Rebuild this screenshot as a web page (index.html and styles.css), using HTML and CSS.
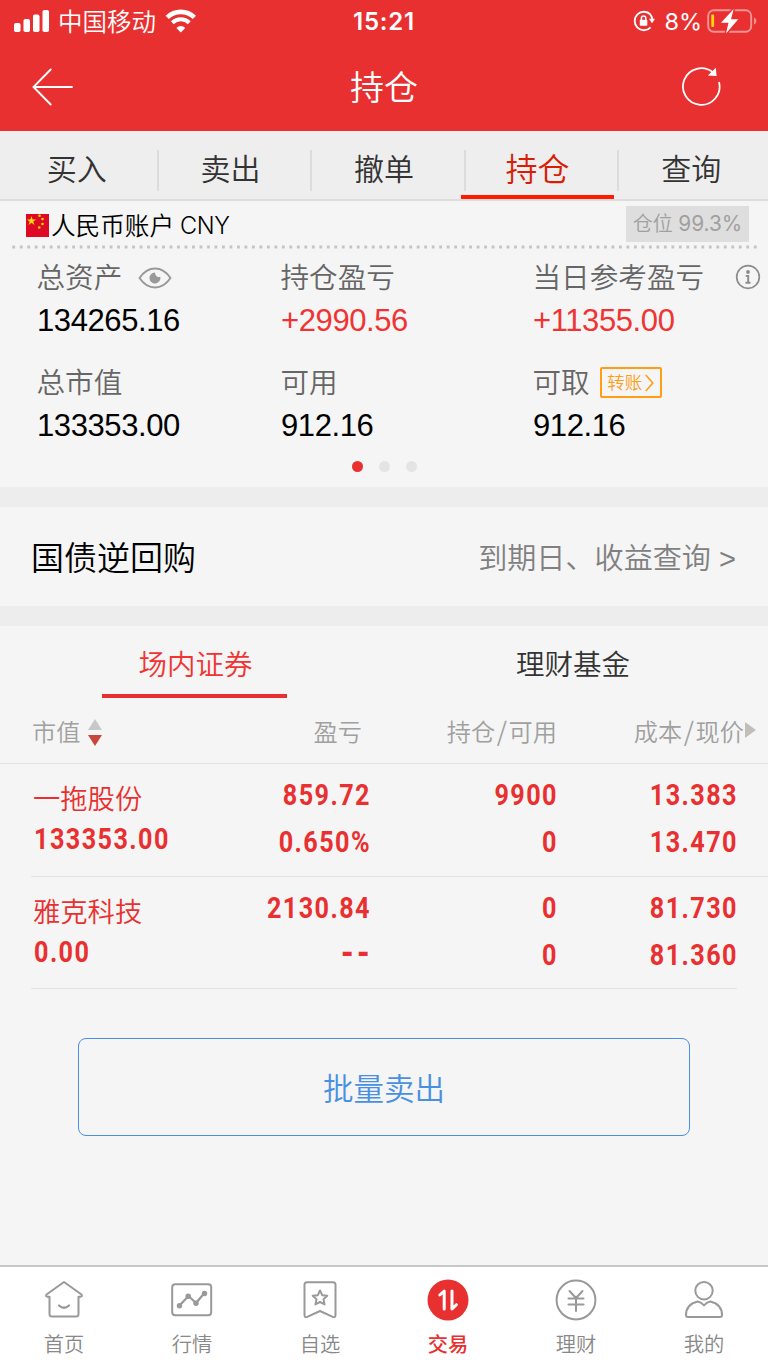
FILE: index.html
```html
<!DOCTYPE html>
<html lang="zh-CN">
<head>
<meta charset="UTF-8">
<title>持仓</title>
<link rel="stylesheet" href="styles.css">
</head>
<body>

<header>
  <div class="status-bar">
    <div class="status-left">
      <svg width="36" height="24" viewBox="0 0 36 24" fill="#fff">
        <rect x="0" y="14" width="6.5" height="9" rx="1.8"/>
        <rect x="9.5" y="10" width="6.5" height="13" rx="1.8"/>
        <rect x="19" y="5.500" width="6.500" height="17.500" rx="1.8"/>
        <rect x="28.500" y="1" width="6.500" height="22" rx="1.8"/>
      </svg>
      <span class="carrier">中国移动</span>
      <svg width="32" height="24" viewBox="0 0 32 24" fill="none" stroke="#fff">
        <path d="M2.200 8.400a19.500 19.500 0 0 1 27.200 0" stroke-width="4.600"/>
        <path d="M7.300 13.700a12.300 12.300 0 0 1 17 0" stroke-width="4"/>
        <path d="M15.800 23.400l-4.400-4.500a6.300 6.300 0 0 1 8.800 0z" fill="#fff" stroke="none"/>
      </svg>
    </div>
    <div class="clock">15:21</div>
    <div class="status-right">
      <svg width="22" height="22" viewBox="0 0 22 22">
        <path d="M17.600 4.700A9.200 9.200 0 1 0 17.600 17.300" fill="none" stroke="#fff" stroke-width="1.900"/>
        <path d="M17.300 4.500Q19.300 6.800 19.300 10" fill="none" stroke="#fff" stroke-width="1.900"/>
        <path d="M16 8.800h6l-3 4.500z" fill="#fff"/>
        <rect x="6.800" y="9.800" width="7.500" height="6" rx="0.800" fill="#fff"/>
        <path d="M8.400 10V8.200a2.200 2.200 0 0 1 4.400 0V10" fill="none" stroke="#fff" stroke-width="1.500"/>
      </svg>
      <span class="percent">8%</span>
      <svg width="50" height="26" viewBox="0 0 50 26">
        <rect x="1.200" y="2.200" width="43" height="21.500" rx="5.500" fill="none" stroke="#f39496" stroke-width="1.900"/>
        <path d="M47 9.500c3 1 3 6 0 7z" fill="#f39496"/>
        <rect x="4.300" y="6.500" width="2.800" height="12.500" rx="1" fill="#ffd60a"/>
        <path d="M26.700 1L14 14.800h7.500L19 25.500 31.300 11.300H24z" fill="#fff" stroke="#e93030" stroke-width="3" paint-order="stroke"/>
      </svg>
    </div>
  </div>
  <div class="title-bar">
    <svg width="42" height="38" viewBox="0 0 42 38" fill="none" stroke="#fff" stroke-width="1.900" stroke-linecap="round">
      <path d="M18.700 1.500L1.500 19l17.200 17.500M2 19h38"/>
    </svg>
    <h1>持仓</h1>
    <svg width="40" height="40" viewBox="0 1.500 40 40">
      <path d="M32 7A18.300 18.300 0 1 0 38 16.500" fill="none" stroke="#fff" stroke-width="1.800"/>
      <path d="M34.800 2.300l.8 8.200-8.800-.4z" fill="#fff"/>
    </svg>
  </div>
</header>

<nav class="tabs">
  <a>买入</a>
  <a>卖出</a>
  <a>撤单</a>
  <a class="active">持仓</a>
  <a>查询</a>
</nav>

<section class="account">
  <div class="account-name">
    <svg width="23" height="23" viewBox="0 0 23 23">
      <rect width="23" height="23" fill="#de0a25"/>
      <g fill="#ffde00">
        <path d="M5.500 2l1.100 3.400h3.500L7.300 7.500l1.100 3.400-2.900-2.100-2.900 2.100 1.100-3.400L.9 5.400h3.500z"/>
        <circle cx="13.500" cy="1.700" r="1.300"/>
        <circle cx="16.500" cy="5" r="1.300"/>
        <circle cx="16.500" cy="10" r="1.300"/>
        <circle cx="13.200" cy="13.500" r="1.300"/>
      </g>
    </svg>
    <span>人民币账户</span>
    <span class="currency">CNY</span>
  </div>
  <div class="position">仓位 <span>99.3%</span></div>
</section>
<svg class="dots-line" width="768" height="4"><path d="M12.300 2H758" stroke="#c4c4c4" stroke-width="2.800" stroke-dasharray="2.800 4.690"/></svg>

<section class="summary">
  <div class="item">
    <div class="label">总资产
      <svg class="eye" width="34" height="22" viewBox="0 0 34 22">
        <path d="M1.500 11Q8 1.500 17 1.500T32.500 11Q26 20.500 17 20.500T1.500 11z" fill="none" stroke="#999" stroke-width="1.900"/>
        <path d="M17 5.500a5.500 5.500 0 1 0 5.300 4.200q-4.800 1.300-5.300-4.200z" fill="#999"/>
      </svg>
    </div>
    <div class="value">134265.16</div>
  </div>
  <div class="item">
    <div class="label">持仓盈亏</div>
    <div class="value up">+2990.56</div>
  </div>
  <div class="item">
    <div class="label">当日参考盈亏
      <svg class="info" width="26" height="26" viewBox="0 0 26 26" fill="none" stroke="#8c8c8c">
        <circle cx="13" cy="13" r="11.300" stroke-width="1.700"/>
        <circle cx="13" cy="8" r="1.900" fill="#8c8c8c" stroke="none"/>
        <path d="M10.700 11.900h2.500v6.500M10.500 18.700h5" stroke-width="1.900"/>
      </svg>
    </div>
    <div class="value up">+11355.00</div>
  </div>
  <div class="item">
    <div class="label">总市值</div>
    <div class="value">133353.00</div>
  </div>
  <div class="item">
    <div class="label">可用</div>
    <div class="value">912.16</div>
  </div>
  <div class="item">
    <div class="label">可取
      <span class="transfer">转账
        <svg width="9" height="18" viewBox="0 0 9 18" fill="none" stroke="#ff9d15" stroke-width="1.600"><path d="M.8 1l7 8-7 8"/></svg>
      </span>
    </div>
    <div class="value">912.16</div>
  </div>
</section>
<div class="pager"><i class="on"></i><i></i><i></i></div>

<div class="gap"></div>

<section class="repo">
  <h2>国债逆回购</h2>
  <a>到期日、收益查询 <span>&gt;</span></a>
</section>

<div class="gap"></div>

<nav class="sub-tabs">
  <a class="active"><span>场内证券</span></a>
  <a><span>理财基金</span></a>
</nav>

<section class="holdings">
  <div class="row head">
    <div>市值
      <svg width="14" height="27" viewBox="0 0 14 27">
        <path d="M7 0l7 11H0z" fill="#c8c8c8"/>
        <path d="M0 16h14L7 27z" fill="#c8473d"/>
      </svg>
    </div>
    <div>盈亏</div>
    <div>持仓<i>/</i>可用</div>
    <div>成本<i>/</i>现价</div>
    <svg class="more" width="11" height="16" viewBox="0 0 11 16"><path d="M0 0l11 8-11 8z" fill="#c2bebb"/></svg>
  </div>
  <div class="row">
    <div><b class="name">一拖股份</b><b>133353.00</b></div>
    <div><b>859.72</b><b>0.650%</b></div>
    <div><b>9900</b><b>0</b></div>
    <div><b>13.383</b><b>13.470</b></div>
  </div>
  <div class="row last">
    <div><b class="name">雅克科技</b><b>0.00</b></div>
    <div><b>2130.84</b><b class="dash">--</b></div>
    <div><b>0</b><b>0</b></div>
    <div><b>81.730</b><b>81.360</b></div>
  </div>
</section>

<button class="sell-btn">批量卖出</button>

<footer>
  <a>
    <svg width="42" height="42" viewBox="0 0 42 42">
      <path d="M21 3L3.500 15.500q-1.200 2 1 2.300H6.500V35q0 2.500 2.500 2.500h24q2.500 0 2.500-2.500V17.800h2q2.200-.3 1-2.300z"/>
      <path d="M16 26.500q5 4.500 10 0" stroke-width="2.300"/>
    </svg>
    首页
  </a>
  <a>
    <svg width="42" height="42" viewBox="0 0 42 42">
      <rect x="1.200" y="5.200" width="39" height="31" rx="3"/>
      <path d="M8.500 26.500l9-9.500 7.500 7 8.500-10" stroke-width="2.300"/>
      <g fill="#999" stroke="none"><circle cx="8.500" cy="26.700" r="2.700"/><circle cx="17.200" cy="17.300" r="2.700"/><circle cx="25" cy="24.200" r="2.700"/><circle cx="33.500" cy="14.500" r="2.700"/></g>
    </svg>
    行情
  </a>
  <a>
    <svg width="42" height="42" viewBox="0 0 42 42">
      <path d="M8 3.300h26q2.500 0 2.500 2.500V36q0 3-2.800 1.800L21 32 8.300 37.800Q5.500 39 5.500 36V5.800Q5.500 3.300 8 3.300z"/>
      <path d="M21 11.500l2.200 4.700 5.100.6-3.800 3.500 1 5.100-4.500-2.500-4.500 2.500 1-5.100-3.800-3.500 5.100-.6z"/>
    </svg>
    自选
  </a>
  <a class="active">
    <svg width="42" height="42" viewBox="0 0 42 42">
      <circle cx="21" cy="21" r="20.500" fill="#e93030" stroke="none"/>
      <path d="M12.800 16l4.400-4v18M25 12v18l4.400-4.300" stroke="#fff" stroke-width="3"/>
    </svg>
    交易
  </a>
  <a>
    <svg width="42" height="42" viewBox="0 0 42 42">
      <circle cx="21" cy="21" r="19.400"/>
      <path d="M14.500 12l6.500 7 6.500-7M21 19v13M13.500 19.500h15M13.500 25.500h15"/>
    </svg>
    理财
  </a>
  <a>
    <svg width="42" height="42" viewBox="0 0 42 42">
      <circle cx="21" cy="11.700" r="8.700"/>
      <path d="M14.500 22.500q3.500.5 6.500 3.800 3-3.300 6.500-3.800 11.500 3 11.500 13.500 0 2-2 2H5q-2 0-2-2Q3 25.500 14.500 22.500z"/>
    </svg>
    我的
  </a>
</footer>

</body>
</html>
```
FILE: styles.css
```css
* {
  box-sizing: border-box;
}

body {
  margin: 0;
  height: 1367px;
  display: flex;
  flex-direction: column;
  background: #f5f5f5;
  color: #000;
  font-family: "Liberation Sans", "Noto Sans CJK SC", sans-serif;
  font-weight: 350;
  overflow: hidden;
}

svg {
  display: block;
  flex: none;
}

h1, h2 {
  margin: 0;
  font-weight: 350;
}

header {
  height: 131px;
  background: #e93030;
  color: #fff;
}

.status-bar {
  height: 42px;
  padding: 0 11px 0 14px;
  display: grid;
  grid-template-columns: 1fr auto 1fr;
  align-items: center;
}

.status-left, .status-right {
  display: flex;
  align-items: center;
}

.status-right {
  justify-content: flex-end;
}

.carrier {
  font-size: 24.5px;
  line-height: 36px;
  margin: 3px 9px 0 8px;
}

.clock {
  font: 600 24px Inter, sans-serif;
  letter-spacing: 0.8px;
  margin-right: 3px;
}

.percent {
  font: 400 23.5px Inter, sans-serif;
  margin: 0 5px 0 9px;
}

.title-bar {
  height: 87px;
  padding: 0 32px;
  display: grid;
  grid-template-columns: 1fr auto 1fr;
  align-items: center;
}

.title-bar h1 {
  font-size: 34px;
}

.title-bar svg {
  margin-top: 2px;
}

.title-bar svg:last-child {
  margin-left: auto;
  margin-right: 15px;
}

.tabs {
  height: 70px;
  display: flex;
  background: #eee;
  border-bottom: 2px solid #dcdcdc;
}

.tabs a {
  flex: 1;
  height: 68px;
  position: relative;
  display: flex;
  align-items: center;
  justify-content: center;
  padding-top: 3px;
  font-size: 30px;
  color: #333;
}

.tabs a + a::before {
  content: "";
  position: absolute;
  left: 3px;
  top: 19px;
  width: 2px;
  height: 41px;
  background: #dcdcdc;
}

.tabs .active {
  font-size: 32px;
  color: #d81e06;
}

.tabs .active::after {
  content: "";
  position: absolute;
  left: 0;
  right: 0;
  bottom: 0;
  height: 4px;
  background: #ff1a00;
}

.account {
  height: 44px;
  padding: 0 19px 0 26px;
  display: flex;
  align-items: center;
  justify-content: space-between;
}

.account-name {
  display: flex;
  align-items: center;
  font-size: 24.6px;
  line-height: 30px;
  padding-top: 5px;
}

.account-name span {
  margin-left: 2px;
  margin-top: 2px;
}

.account-name .currency {
  font: 350 23.5px Inter, sans-serif;
  letter-spacing: -0.4px;
  margin-left: 6px;
  margin-top: 0;
}

.position {
  width: 123px;
  height: 36px;
  line-height: 36px;
  margin-top: 2px;
  background: #dedede;
  color: #a0a0a0;
  font-size: 20px;
  text-align: center;
  white-space: nowrap;
}

.position span {
  font-family: Inter, sans-serif;
  font-weight: 400;
  font-size: 20.8px;
}

.summary {
  height: 204px;
  padding: 8px 0 0 37px;
  display: grid;
  grid-template-columns: 244px 252px 1fr;
  grid-auto-rows: 104.5px;
}

.label {
  height: 40px;
  display: flex;
  align-items: center;
  font-size: 28.6px;
  line-height: 36px;
  padding-top: 2px;
  margin-left: -0.5px;
  color: #666;
  white-space: nowrap;
}

.value {
  height: 48px;
  line-height: 48px;
  font-size: 31px;
  letter-spacing: -0.4px;
}

.up {
  color: #f03333;
}

.eye {
  margin-left: 16px;
}

.info {
  margin-left: 31px;
  margin-top: -2px;
}

.transfer {
  width: 62px;
  height: 31px;
  margin-left: 10px;
  border: 2px solid #ff9d15;
  border-radius: 2px;
  display: flex;
  align-items: center;
  justify-content: center;
  gap: 3px;
  font-size: 17.5px;
  line-height: 24px;
  color: #ff9d15;
}

.pager {
  height: 34px;
  padding-top: 8px;
  display: flex;
  justify-content: center;
  gap: 16px;
}

.pager i {
  width: 11px;
  height: 11px;
  border-radius: 50%;
  background: #e4e4e4;
}

.pager .on {
  background: #e93030;
}

.gap {
  height: 20px;
  background: #ededed;
}

.repo {
  height: 99px;
  padding: 0 32px 1px 31px;
  display: flex;
  align-items: center;
  justify-content: space-between;
}

.repo h2 {
  font-size: 33px;
}

.repo a {
  font-size: 29.1px;
  color: #808080;
}

.sub-tabs {
  height: 72px;
  display: flex;
  font-size: 28.5px;
  color: #333;
}

.sub-tabs a {
  width: 184px;
  height: 72px;
  margin-left: 102px;
  line-height: 79px;
  text-align: center;
}

.sub-tabs a + a {
  margin-left: 194px;
}

.sub-tabs .active {
  width: 185px;
  padding-left: 2px;
  border-bottom: 4px solid #e93030;
  color: #f03333;
}

.row {
  height: 113px;
  margin-left: 31px;
  padding-right: 31px;
  display: grid;
  grid-template-columns: 169px 170px 187px 180px;
  border-bottom: 1px solid #e2e2e2;
  text-align: right;
  color: #e93030;
}

.row > div:first-child {
  text-align: left;
  padding-left: 3px;
}

/* narrow DIN-like figures */
.row b {
  display: block;
  height: 47px;
  font: 700 30px/47px Roboto, sans-serif;
  letter-spacing: 1.7px;
  margin-right: -1px;
  transform: scaleX(0.84);
  transform-origin: right;
}

.row > div:first-child b {
  transform-origin: left;
}

.row > div {
  padding-top: 7px;
}

.row .name {
  font: 350 27.3px/44px "Noto Sans CJK SC", sans-serif;
  height: 46px;
  padding-top: 4px;
  margin-left: -1px;
  letter-spacing: 0;
  transform: none;
}

.row > div:first-child b + b {
  height: 44px;
  line-height: 44px;
}

.row .dash {
  font-size: 38px;
  letter-spacing: 4px;
  line-height: 45px;
  margin-right: -3px;
}

.head {
  position: relative;
  height: 66px;
  margin-left: 0;
  padding-left: 31px;
  font-size: 24.2px;
  color: #a0a0a0;
}

.head > div {
  padding-top: 0;
  line-height: 69px;
}

.head i {
  font: 350 26px "Noto Sans CJK SC", sans-serif;
  line-height: 1;
  margin: 0 1.6px;
}

.head > div:nth-child(2) {
  padding-right: 8px;
}

.head > div:first-child {
  padding-left: 1px;
  display: flex;
  align-items: center;
  gap: 8px;
}

.head > div:nth-child(4) {
  margin-right: -7px;
}

.more {
  position: absolute;
  right: 12px;
  top: 24px;
}

.last {
  margin-right: 31px;
  padding-right: 0;
  height: 112px;
}

.sell-btn {
  width: 612px;
  height: 98px;
  margin: 49px auto 0;
  border: 1px solid #4a90e2;
  border-radius: 8px;
  background: none;
  color: #4a90e2;
  font: 350 30.5px "Noto Sans CJK SC", sans-serif;
}

footer {
  height: 102px;
  margin-top: auto;
  padding-top: 12px;
  display: flex;
  background: #fff;
  border-top: 2px solid #c8c8c8;
}

footer a {
  flex: 1;
  display: flex;
  flex-direction: column;
  align-items: center;
  font-size: 20.3px;
  line-height: 48px;
  color: #888;
}

footer svg {
  fill: none;
  stroke: #999;
  stroke-width: 2;
  stroke-linecap: round;
  stroke-linejoin: round;
}

footer .active {
  color: #e93030;
  font-weight: 500;
}
```
